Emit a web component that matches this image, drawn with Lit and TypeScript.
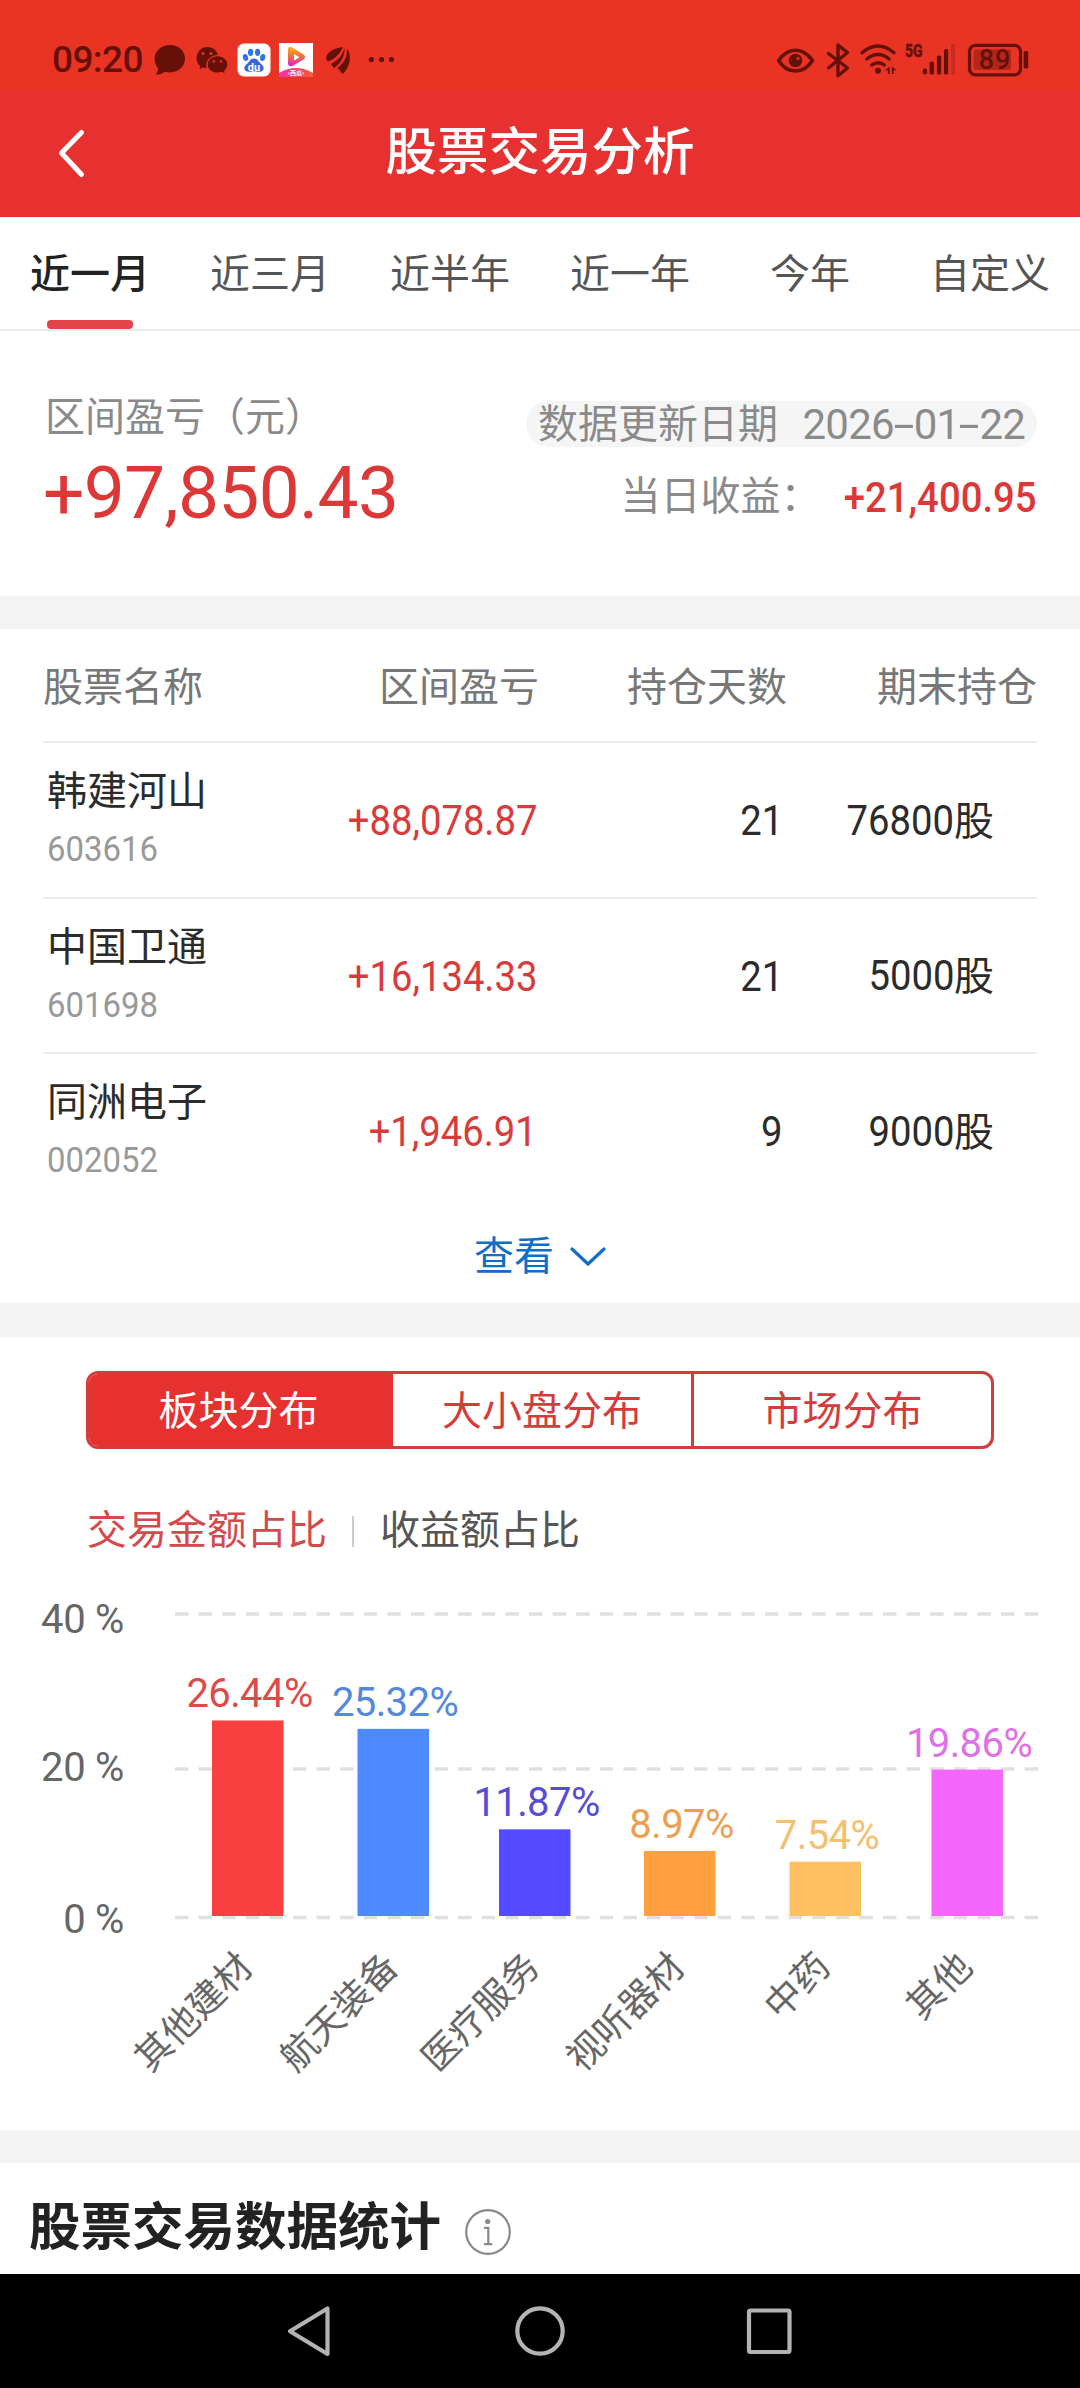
import { LitElement, html, css, svg } from "lit";
import { customElement, state } from "lit/decorators.js";
import { classMap } from "lit/directives/class-map.js";

const INK = "#66100a";

@customElement("status-bar")
class StatusBar extends LitElement {
  static styles = css`
    :host {
      display: flex;
      justify-content: space-between;
      height: 90px;
      background: #e93424;
    }
    .left {
      display: flex;
      padding-left: 52px;
    }
    .time {
      width: 98px;
      line-height: 120px;
      font-size: 37px;
      font-weight: 500;
      color: #66100a;
      letter-spacing: -0.6px;
      white-space: nowrap;
    }
    svg {
      display: block;
      font-family: Roboto, sans-serif;
    }
  `;
  render() {
    return html`
      <div class="left">
        <span class="time">09:20</span>
        <svg width="260" height="90" viewBox="150 0 260 90">
          <path fill=${INK} d="M170 45c8.700 0 15 6 15 13.600s-6.300 13.900-15 13.900c-1.900 0-3.700-.3-5.300-.8-2.600 2.100-5.600 3-9.200 2.900 1.800-1.700 2.600-3.700 2.700-6-2.100-2.500-3.600-6-3.600-10C154.600 51 161.300 45 170 45z"/>
          <path fill=${INK} d="M207 47c5.800 0 10 3.500 10.700 7.900-6.600.3-11.500 4.600-11.500 10.300 0 1 .1 1.900.4 2.800-1.300 0-2.700-.1-3.900-.5l-3.200 1.700.8-3c-2.300-1.800-3.700-4.300-3.700-7.600C196.600 51.800 201.300 47 207 47z"/>
          <path fill=${INK} d="M217.500 56.200c5.700 0 9.800 3.700 9.800 8.200 0 2.600-1.300 4.800-3.200 6.300l.6 2.500-2.700-1.500c-1.400.5-2.900.8-4.500.8-5.500 0-9.800-3.600-9.800-8.100s4.300-8.200 9.800-8.200z"/>
          <g fill="#e93424"><circle cx="203" cy="53.500" r="1.500"/><circle cx="211" cy="53.500" r="1.500"/><circle cx="214" cy="61.500" r="1.300"/><circle cx="221" cy="61.500" r="1.300"/></g>
          <rect x="237.500" y="43.500" width="33" height="33" rx="6.500" fill="#fff"/>
          <g fill="#2f74e8">
            <ellipse cx="245.500" cy="57.500" rx="2.600" ry="3.500" transform="rotate(-12 245.500 57.500)"/>
            <ellipse cx="250.600" cy="52.300" rx="2.600" ry="3.600"/>
            <ellipse cx="257.600" cy="52.300" rx="2.600" ry="3.600"/>
            <ellipse cx="262.700" cy="57.500" rx="2.600" ry="3.500" transform="rotate(12 262.700 57.500)"/>
          </g>
          <path fill="#3c62e0" d="M254 58.500c3.500 0 4.600 3.200 6.500 5 2 1.700 3.300 2.800 3.100 5-.2 2.300-2 3.200-4.200 3.200-2 0-3.400-.5-5.400-.5s-3.400.5-5.400.5c-2.200 0-4-.9-4.200-3.200-.2-2.200 1.100-3.300 3.100-5 1.900-1.800 3-5 6.500-5z"/>
          <text x="254" y="70.500" font-size="11" font-weight="700" fill="#fff" text-anchor="middle">du</text>
          <defs>
            <linearGradient id="pg" x1="0" y1="0" x2="0" y2="1"><stop offset="0" stop-color="#f9b528"/><stop offset=".45" stop-color="#f3752e"/><stop offset="1" stop-color="#e01ae0"/></linearGradient>
            <linearGradient id="pb" x1="0" y1="0" x2="1" y2="0"><stop offset="0" stop-color="#f52fb2"/><stop offset="1" stop-color="#fb5a2e"/></linearGradient>
          </defs>
          <rect x="279" y="43" width="34" height="34" fill="#fff"/>
          <path fill="url(#pg)" fill-rule="evenodd" d="M288 49.500q0-3.500 3.500-2.500l12 7.500q3 2.500 0 5l-11 6.500q-4 1-4.500-2zM294 54v6.500l5.500-3.200z"/>
          <path fill="url(#pb)" d="M279 73q17-10 34 0v4h-34z"/>
          <text x="296" y="75.300" font-size="6" font-weight="700" fill="#fff" text-anchor="middle" font-family="Noto Sans CJK SC">‹西瓜›</text>
          <g fill=${INK}>
            <path d="M343 47c-7 1-14 3.500-16.500 9-.7 2 0 4.500 1.200 5.500C334 59.500 340 54 343 47z"/>
            <path d="M344.500 47.500c-1.500 7.500-6.500 13-13.500 16.500l2.800 4C341 63.500 345 56 344.500 47.500z"/>
            <path d="M347 48.500c.5 8-2.500 14-9.500 19.500l5.500 6.200c3-3.700 5-7 6.500-12C350.500 57 349.500 52 347 48.500z"/>
          </g>
          <path d="M346 48.500c.3 8-3.300 14-9.500 19.500" fill="none" stroke="#e93424" stroke-width="1.200"/>
          <g fill=${INK}><circle cx="371.300" cy="59.500" r="2.600"/><circle cx="381.500" cy="59.500" r="2.600"/><circle cx="391.500" cy="59.500" r="2.600"/></g>
        </svg>
      </div>
      <svg width="320" height="90" viewBox="760 0 320 90">
        <g fill="none" stroke=${INK} stroke-linecap="round" stroke-linejoin="round">
          <path stroke-width="3.600" d="M778.600 60.500C783 54 789 50.200 795.500 50.200S808 54 812.500 60.500C808 67.500 802 71 795.500 71S783 67.500 778.600 60.500z"/>
          <path stroke-width="3.400" d="M828.500 53.500 847.500 68 838 75.800V45l9.500 7.500L828.500 68"/>
          <path stroke-width="3.400" d="M862 52.800q16-13.500 32 0M866.800 59q11.200-9 22.400 0M871.700 65q6.300-4.600 12.600 0"/>
        </g>
        <circle cx="795.500" cy="60.500" r="6.800" fill=${INK}/><circle cx="798" cy="58.500" r="1.600" fill="#e93424"/>
        <circle cx="878" cy="70.800" r="3" fill=${INK}/>
        <path fill=${INK} d="M889.700 66.500v7.500h-1.800v-3.700h-3zM891.800 66.500l4.800 3.700h-3v3.800h-1.800z"/>
        <text x="905" y="57.300" font-size="18.500" font-weight="700" fill=${INK} stroke=${INK} stroke-width=".6" textLength="17.500" lengthAdjust="spacingAndGlyphs">5G</text>
        <g fill=${INK}>
          <rect x="922.700" y="68.500" width="4.400" height="6" rx="2"/><rect x="929.600" y="61.500" width="4.400" height="13" rx="1.500"/>
          <rect x="936.900" y="55.500" width="4.200" height="19" rx="1.500"/><rect x="944" y="49" width="4.200" height="25.500" rx="1.500"/>
          <rect x="951" y="44" width="4.200" height="30.500" rx="1.500" opacity=".25"/>
          <rect x="973.700" y="49.500" width="37.300" height="20.500" rx="2.500" opacity=".4"/>
          <rect x="1023.700" y="51" width="4.500" height="17.500" rx="1.500"/>
        </g>
        <rect x="969.500" y="45.300" width="51" height="29.500" rx="6" fill="none" stroke=${INK} stroke-width="3.200"/>
        <text x="995" y="69" font-size="27" font-weight="500" fill=${INK} text-anchor="middle" letter-spacing="1">89</text>
      </svg>
    `;
  }
}

interface Holding {
  name: string;
  code: string;
  profit: string;
  days: string;
  shares: string;
}

const HOLDINGS: Holding[] = [
  { name: "韩建河山", code: "603616", profit: "+88,078.87", days: "21", shares: "76800" },
  { name: "中国卫通", code: "601698", profit: "+16,134.33", days: "21", shares: "5000" },
  { name: "同洲电子", code: "002052", profit: "+1,946.91", days: "9", shares: "9000" },
];

@customElement("holdings-table")
class HoldingsTable extends LitElement {
  static styles = css`
    :host {
      display: block;
      padding: 0 43px;
      height: 674px;
      box-sizing: border-box;
    }
    .head,
    .row {
      display: grid;
      grid-template-columns: 230px 266px 248px 250px;
      align-items: center;
      white-space: nowrap;
    }
    .head {
      height: 112px;
      padding-top: 5px;
      box-sizing: border-box;
      color: #777;
      text-align: right;
    }
    .head .first {
      text-align: left;
    }
    .row {
      height: 155.500px;
      box-sizing: border-box;
      border-top: 2px solid #ebebeb;
      padding-top: 3px;
      text-align: right;
      color: #2b2b2b;
      font-size: 42px;
    }
    .id {
      display: flex;
      flex-direction: column;
      text-align: left;
      padding-left: 4px;
    }
    .name {
      font-size: 40px;
      line-height: 58px;
    }
    .code {
      font-size: 35px;
      line-height: 58px;
      color: #999;
      transform: scaleX(0.94);
      transform-origin: left;
    }
    .num {
      display: inline-block;
      font-weight: 450;
      transform: scaleX(0.91);
      transform-origin: right;
    }
    .profit {
      color: #d93b3b;
      padding-right: 2px;
    }
    .days {
      padding-right: 4px;
    }
    .shares {
      padding-right: 43px;
    }
    .unit {
      font-size: 40px;
    }
    .more {
      display: flex;
      justify-content: center;
      align-items: center;
      gap: 16px;
      height: 96px;
      color: #0f6fc6;
    }
    .more span {
      padding-top: 3px;
    }
    .more svg {
      margin-top: 2px;
    }
  `;
  render() {
    return html`
      <div class="head">
        <span class="first">股票名称</span><span>区间盈亏</span><span>持仓天数</span><span>期末持仓</span>
      </div>
      ${HOLDINGS.map(
        (h) => html`
          <div class="row">
            <div class="id"><span class="name">${h.name}</span><span class="code">${h.code}</span></div>
            <div class="profit"><span class="num">${h.profit}</span></div>
            <div class="days"><span class="num">${h.days}</span></div>
            <div class="shares"><span class="num">${h.shares}</span><span class="unit">股</span></div>
          </div>
        `
      )}
      <div class="more">
        <span>查看</span>
        <svg width="36" height="20" viewBox="0 0 36 20">
          <path d="M2 2 18 17 34 2" fill="none" stroke="#0f6fc6" stroke-width="3.200" stroke-linecap="round" stroke-linejoin="round" />
        </svg>
      </div>
    `;
  }
}

interface Sector {
  name: string;
  value: number;
  color: string;
  ink: string;
  x: number;
}

const SECTORS: Sector[] = [
  { name: "其他建材", value: 26.44, color: "#f84040", ink: "#dd4a4a", x: 212 },
  { name: "航天装备", value: 25.32, color: "#4e8aff", ink: "#5488dc", x: 357.5 },
  { name: "医疗服务", value: 11.87, color: "#544aff", ink: "#564cd6", x: 499 },
  { name: "视听器材", value: 8.97, color: "#ff9f40", ink: "#eca04f", x: 644 },
  { name: "中药", value: 7.54, color: "#ffc062", ink: "#f2c06f", x: 789.5 },
  { name: "其他", value: 19.86, color: "#f466fb", ink: "#e070e6", x: 931.5 },
];

@customElement("sector-chart")
class SectorChart extends LitElement {
  static styles = css`
    :host {
      display: block;
      height: 566px;
    }
    svg {
      display: block;
    }
    .axis {
      font-size: 40px;
      fill: #666;
      letter-spacing: -0.3px;
    }
    .value {
      font-size: 40px;
      letter-spacing: -0.6px;
    }
    .name {
      font-size: 37px;
      fill: #666;
    }
    .grid {
      stroke: #e0e0e0;
      stroke-width: 3.500;
      stroke-dasharray: 13.400 10.200;
    }
  `;
  render() {
    const base = 352;
    const perPoint = 7.47;
    return html`
      <svg width="1080" height="566" viewBox="0 0 1080 566">
        ${[50, 205, 353.5].map((y) => svg`<line class="grid" x1="175" x2="1040" y1=${y} y2=${y} />`)}
        ${[["40 %", 69], ["20 %", 217], ["0 %", 369]].map(
          ([t, y]) => svg`<text class="axis" x="124" y=${y} text-anchor="end">${t}</text>`
        )}
        ${SECTORS.map((s) => {
          const h = s.value * perPoint - 2;
          const top = base - h;
          return svg`
            <rect x=${s.x} y=${top} width="71.500" height=${h} fill=${s.color} />
            <text class="value" x=${s.x + 37.5} y=${top - 13} text-anchor="middle" fill=${s.ink}>${s.value.toFixed(2)}%</text>
            <text class="name" text-anchor="end" transform="translate(${s.x + 33} 395) rotate(-45)" x="0" y="14">${s.name}</text>
          `;
        })}
      </svg>
    `;
  }
}

@customElement("app-root")
class AppRoot extends LitElement {
  @state() private range = 0;
  @state() private segment = 0;
  @state() private metric = 0;

  static styles = css`
    :host {
      display: flex;
      flex-direction: column;
      width: 1080px;
      height: 2388px;
      overflow: hidden;
      background: #fff;
      font-family: Roboto, "Noto Sans CJK SC", sans-serif;
      font-size: 40px;
      line-height: 48px;
    }
    :host > * {
      flex: none;
    }
    .header {
      display: grid;
      grid-template-columns: 140px 1fr 140px;
      align-items: center;
      height: 127px;
      box-sizing: border-box;
      padding-bottom: 2px;
      background: #e73131;
      color: #fff;
    }
    .back {
      display: block;
      margin-left: 56px;
    }
    .title {
      text-align: center;
      font-size: 51.500px;
      font-weight: 500;
      line-height: 60px;
    }
    .tabs {
      display: grid;
      grid-template-columns: repeat(6, 1fr);
      height: 114px;
      box-sizing: border-box;
      border-bottom: 2px solid #ebebeb;
      color: #555;
    }
    .tab {
      display: flex;
      flex-direction: column;
      align-items: center;
      justify-content: space-between;
      padding-top: 34px;
    }
    .tab.on {
      color: #222;
      font-weight: 500;
    }
    .tab.on::after {
      content: "";
      width: 86px;
      height: 9px;
      border-radius: 4px;
      background: #e34449;
    }
    .summary {
      display: flex;
      justify-content: space-between;
      height: 265px;
      box-sizing: border-box;
      padding: 63px 43px 0 45px;
      color: #8a8a8a;
      white-space: nowrap;
    }
    .total {
      font-size: 73px;
      line-height: 80px;
      margin: 11px 0 0 -2px;
      color: #dc3838;
      letter-spacing: -0.7px;
    }
    .daily {
      display: flex;
      flex-direction: column;
      align-items: flex-end;
      gap: 26px;
      padding-top: 7px;
    }
    .updated {
      display: flex;
      justify-content: space-between;
      box-sizing: border-box;
      width: 511px;
      height: 46px;
      padding: 0 12px;
      line-height: 47px;
      border-radius: 23px;
      background: #f5f5f5;
    }
    .date {
      font-size: 42px;
      letter-spacing: -0.8px;
    }
    .dash {
      display: inline-block;
      width: 20px;
      letter-spacing: 0;
      text-align: center;
      transform: scaleX(1.8);
    }
    .gain {
      display: flex;
    }
    .gain-value {
      font-size: 43px;
      font-weight: 500;
      color: #dc3838;
      transform: scaleX(0.89);
      transform-origin: right;
    }
    .band {
      height: 33px;
      background: #f3f3f3;
    }
    .band.b2 {
      height: 34px;
    }
    .segments {
      display: grid;
      grid-template-columns: 304px 298px 1fr;
      width: 908px;
      height: 78px;
      box-sizing: border-box;
      margin: 34px 0 0 86px;
      border: 3px solid #d63b3b;
      border-radius: 12px;
      overflow: hidden;
      text-align: center;
      line-height: 75px;
      color: #d63b3b;
    }
    .segment:first-child {
      padding-right: 5px;
    }
    .segment + .segment + .segment {
      border-left: 3px solid #d63b3b;
    }
    .segment.on {
      background: #e73131;
      color: #fff;
    }
    .metrics {
      display: flex;
      align-items: center;
      height: 48px;
      margin: 58px 0 9px 87px;
      color: #555;
    }
    .metric.on {
      color: #d24a4c;
    }
    .divider {
      width: 2px;
      height: 31px;
      margin: 0 26px 0 25px;
      background: #ccc;
    }
    .stats {
      display: flex;
      align-items: center;
      gap: 23px;
      height: 111px;
      box-sizing: border-box;
      padding: 18px 0 0 29px;
    }
    .stats-title {
      font-size: 51.500px;
      font-weight: 700;
      line-height: 60px;
      color: #222;
    }
    .info {
      margin-top: 8px;
    }
    .nav {
      display: block;
      background: #000;
    }
  `;

  render() {
    const ranges = ["近一月", "近三月", "近半年", "近一年", "今年", "自定义"];
    const segments = ["板块分布", "大小盘分布", "市场分布"];
    const date = ["2026", "01", "22"];
    return html`
      <status-bar></status-bar>
      <div class="header">
        <svg class="back" width="32" height="52" viewBox="0 0 32 52">
          <path d="M25.500 5.500 5.500 26l20 21.500" fill="none" stroke="#fff" stroke-width="5" stroke-linecap="round" stroke-linejoin="round" />
        </svg>
        <span class="title">股票交易分析</span>
      </div>
      <div class="tabs">
        ${ranges.map(
          (t, i) => html`<div class=${classMap({ tab: true, on: i === this.range })} @click=${() => (this.range = i)}><span>${t}</span></div>`
        )}
      </div>
      <div class="summary">
        <div>
          <div>区间盈亏（元）</div>
          <div class="total">+97,850.43</div>
        </div>
        <div class="daily">
          <div class="updated">
            <span>数据更新日期</span>
            <span class="date">${date.map((part, i) => (i ? html`<span class="dash">-</span>${part}` : part))}</span>
          </div>
          <div class="gain"><span>当日收益：</span><span class="gain-value">+21,400.95</span></div>
        </div>
      </div>
      <div class="band"></div>
      <holdings-table></holdings-table>
      <div class="band b2"></div>
      <div class="segments">
        ${segments.map(
          (t, i) => html`<div class=${classMap({ segment: true, on: i === this.segment })} @click=${() => (this.segment = i)}>${t}</div>`
        )}
      </div>
      <div class="metrics">
        <span class=${classMap({ metric: true, on: this.metric === 0 })} @click=${() => (this.metric = 0)}>交易金额占比</span>
        <span class="divider"></span>
        <span class=${classMap({ metric: true, on: this.metric === 1 })} @click=${() => (this.metric = 1)}>收益额占比</span>
      </div>
      <sector-chart></sector-chart>
      <div class="band"></div>
      <div class="stats">
        <span class="stats-title">股票交易数据统计</span>
        <svg class="info" width="48" height="48" viewBox="0 0 48 48">
          <circle cx="24" cy="24" r="21.800" fill="none" stroke="#888" stroke-width="2.200" />
          <circle cx="23.700" cy="13.500" r="2.600" fill="#888" />
          <path d="M20 19.800h4.300V36M20 36.200h8.300" fill="none" stroke="#888" stroke-width="2.200" />
        </svg>
      </div>
      <svg class="nav" width="1080" height="114" viewBox="0 0 1080 114">
        <g fill="none" stroke="#b3b3b3" stroke-width="4.200" stroke-linejoin="round">
          <path d="M327.500 34.500v45.500L290 57.200z" />
          <circle cx="540" cy="57" r="22.700" />
          <rect x="749" y="36.500" width="40.500" height="41.500" rx="1.500" />
        </g>
      </svg>
    `;
  }
}
